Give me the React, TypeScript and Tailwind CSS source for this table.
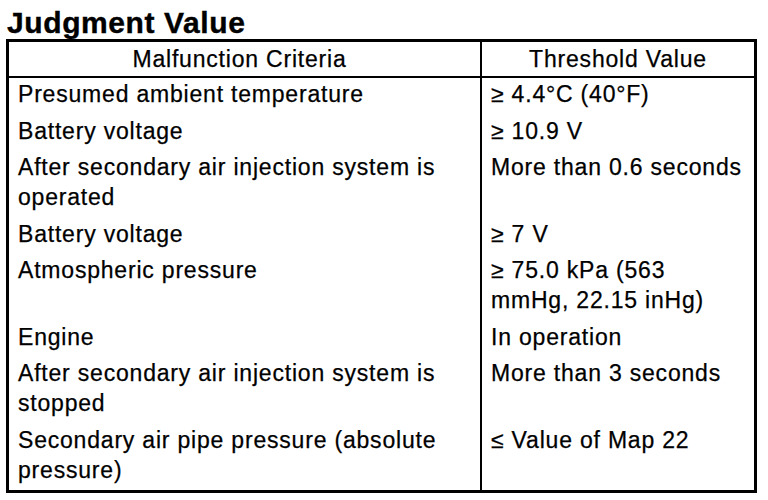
import React from "react";

type Row = { left: React.ReactNode; right: React.ReactNode };

const rows: Row[] = [
  { left: "Presumed ambient temperature", right: "≥ 4.4°C (40°F)" },
  { left: "Battery voltage", right: "≥ 10.9 V" },
  {
    left: (
      <>
        After secondary air injection system is
        <br />
        operated
      </>
    ),
    right: "More than 0.6 seconds",
  },
  { left: "Battery voltage", right: "≥ 7 V" },
  {
    left: "Atmospheric pressure",
    right: (
      <>
        ≥ 75.0 kPa (563
        <br />
        mmHg, 22.15 inHg)
      </>
    ),
  },
  { left: "Engine", right: "In operation" },
  {
    left: (
      <>
        After secondary air injection system is
        <br />
        stopped
      </>
    ),
    right: "More than 3 seconds",
  },
  {
    left: (
      <>
        Secondary air pipe pressure (absolute
        <br />
        pressure)
      </>
    ),
    right: "≤ Value of Map 22",
  },
];

export default function App() {
  return (
    <div className="w-[768px] h-[500px] bg-white text-black overflow-hidden font-['Liberation_Sans',Arial,sans-serif]">
      <div className="pl-[7px] pt-[8px] text-[30px] leading-[30px] font-bold tracking-[0.6px] mb-[1px] [-webkit-text-stroke:0.4px_black]">
        Judgment Value
      </div>
      <div className="ml-[6px] w-[751px] border-[3px] border-black text-[23px] leading-[30px] tracking-[0.8px] [-webkit-text-stroke:0.25px_black]">
        <div className="grid grid-cols-[471px_274px] border-b-2 border-black">
          <div className="text-center pt-[2px] pb-[2px] pr-[10px]">Malfunction Criteria</div>
          <div className="text-center pt-[2px] pb-[2px] border-l-2 border-black">Threshold Value</div>
        </div>
        <div className="grid grid-cols-[471px_274px]">
          {rows.map((r, i) => (
            <React.Fragment key={i}>
              <div className="pl-[9px] pt-[1px] pb-[5.5px] whitespace-nowrap">{r.left}</div>
              <div className="pl-[9px] pt-[1px] pb-[5.5px] border-l-2 border-black whitespace-nowrap">
                {r.right}
              </div>
            </React.Fragment>
          ))}
        </div>
      </div>
    </div>
  );
}
